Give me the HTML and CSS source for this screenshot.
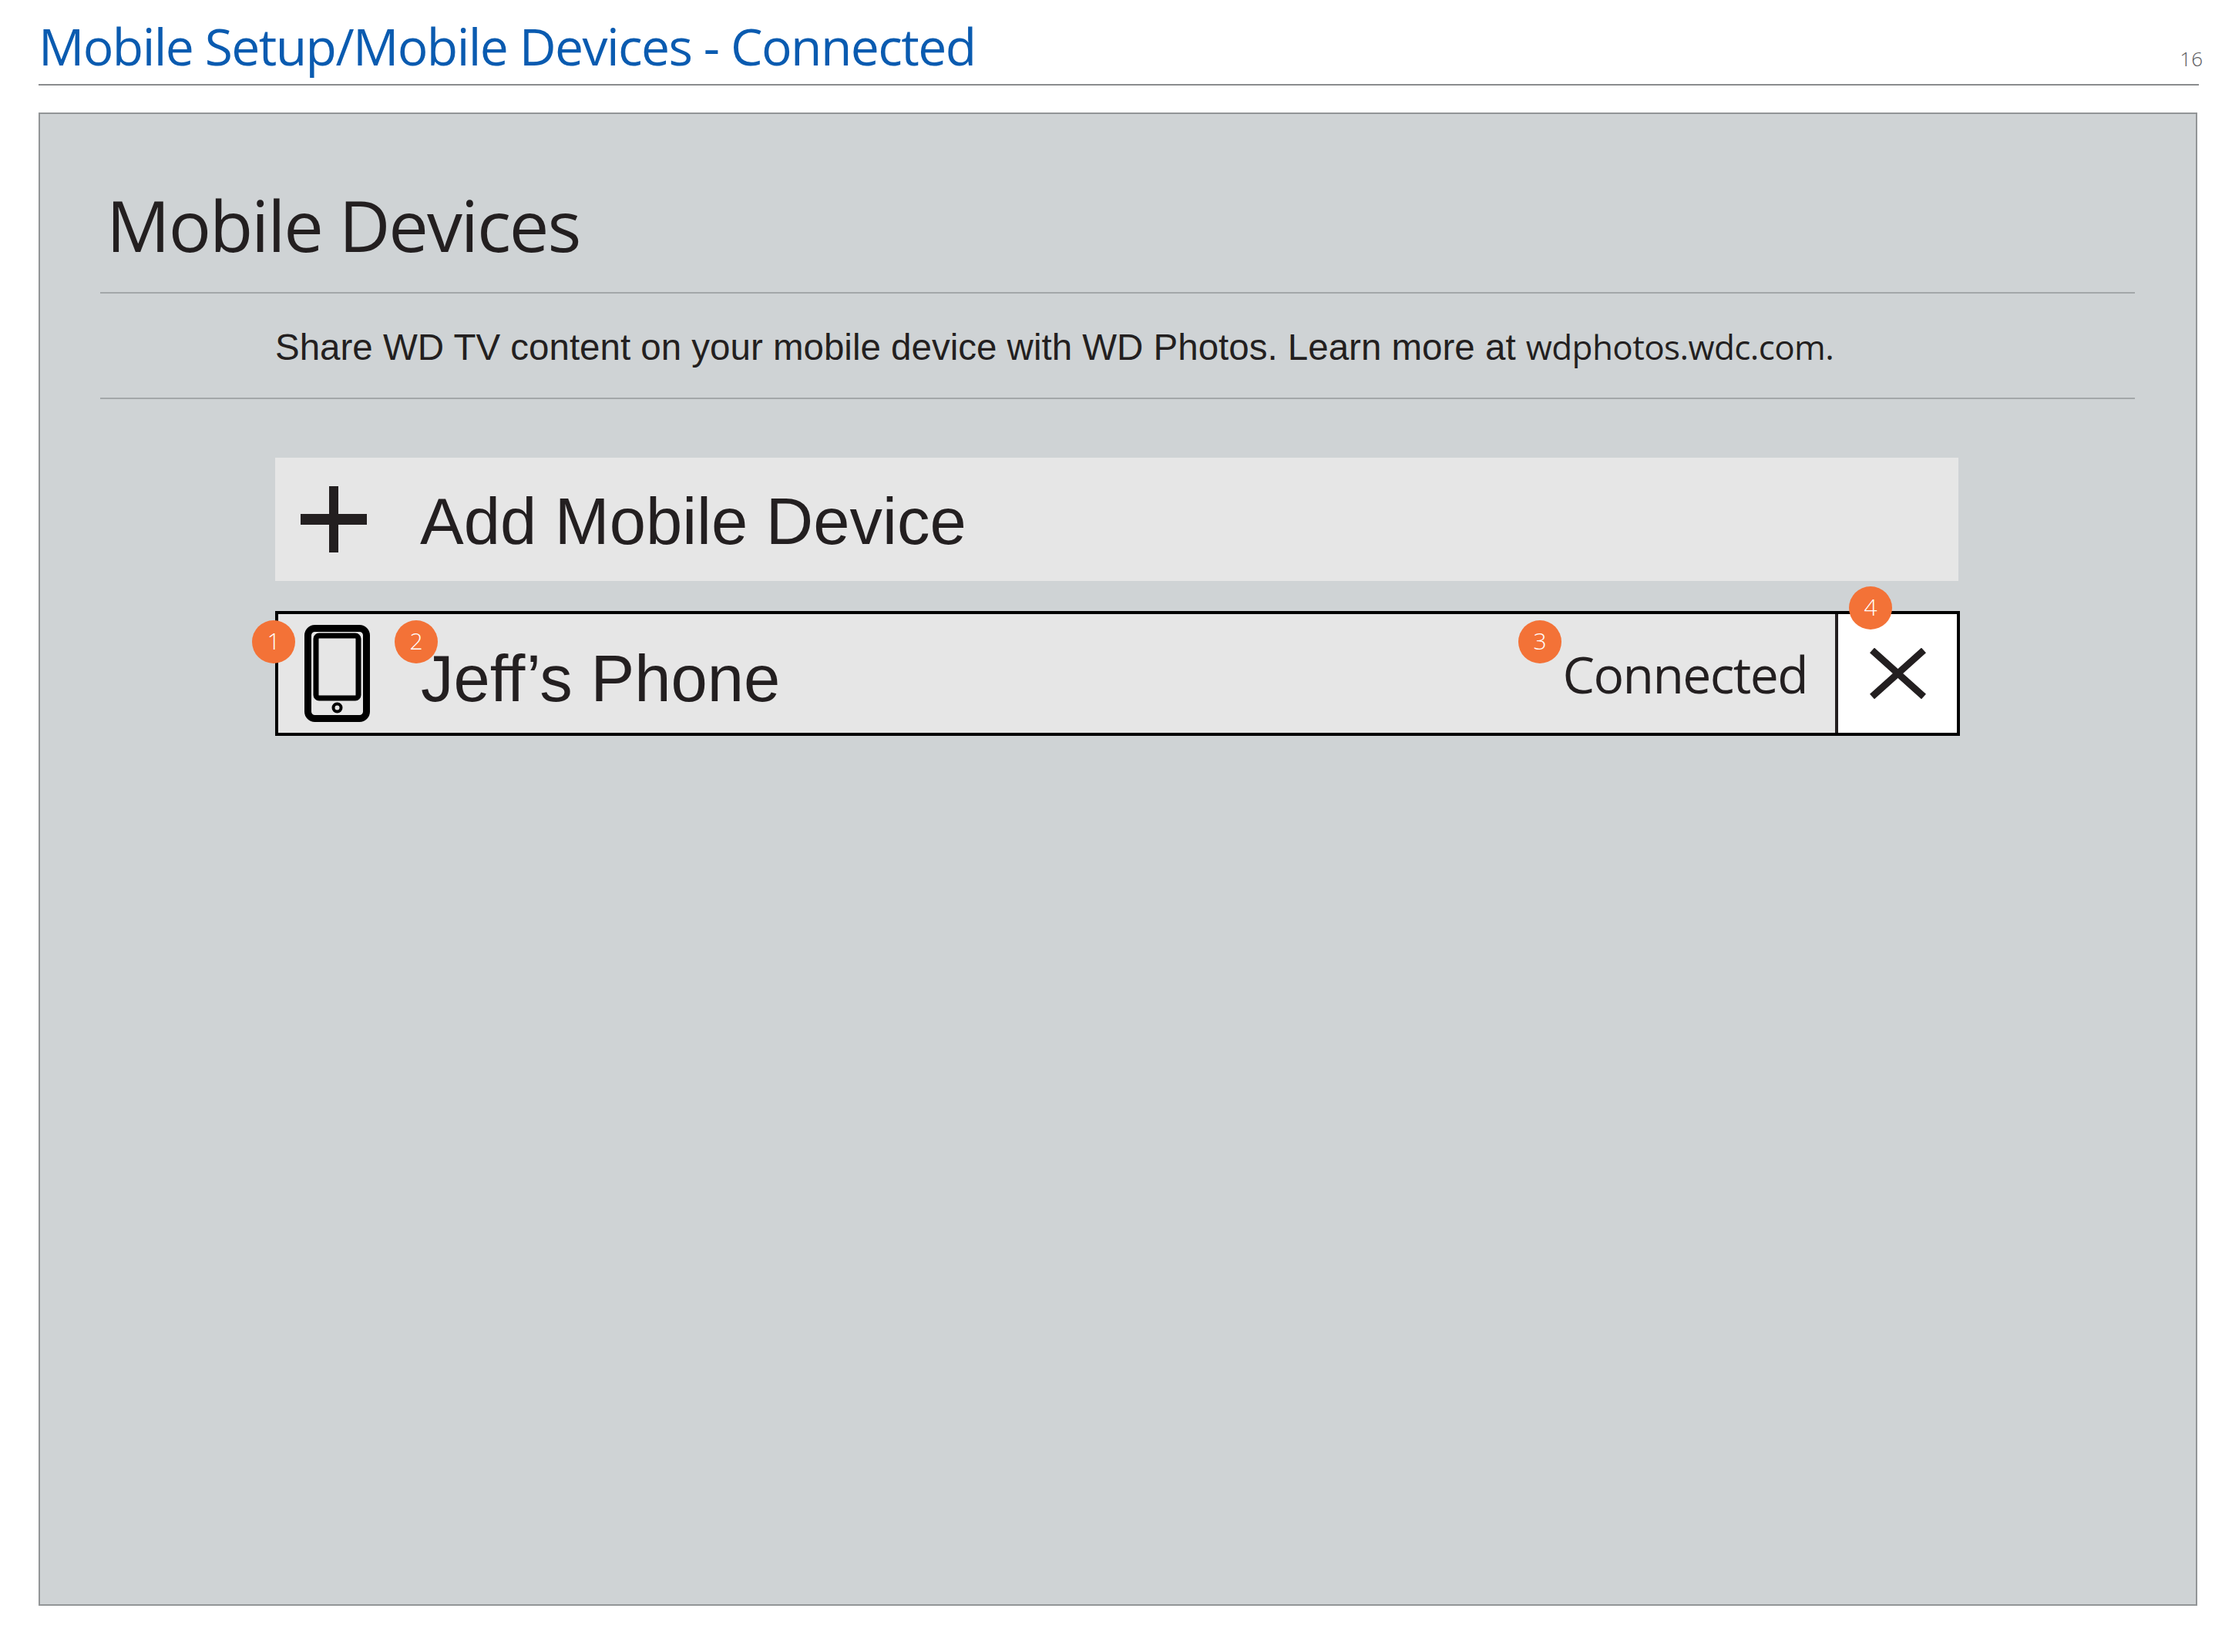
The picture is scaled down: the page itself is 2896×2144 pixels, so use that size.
FILE: index.html
```html
<!DOCTYPE html>
<html lang="en">
<head>
  <meta charset="UTF-8" />
  <title>Mobile Setup/Mobile Devices - Connected</title>
  <link rel="stylesheet" href="styles.css">
</head>
<body>

  <header class="page-header">
    <h1>Mobile Setup/Mobile Devices - Connected</h1>
    <span class="page-num">16</span>
  </header>

  <main class="panel">
    <h2>Mobile Devices</h2>
    <p class="intro">Share WD TV content on your mobile device with WD Photos. Learn more at <span class="link">wdphotos.wdc.com.</span></p>

    <div class="device-list">
      <div class="row add-row">
        <svg class="plus-icon" viewBox="0 0 86 86">
          <path d="M37 0h12v36h37v14H49v36H37V50H0V36h37z" fill="#231f20"/>
        </svg>
        <span class="row-name">Add Mobile Device</span>
      </div>

      <div class="row device-row">
        <span class="badge badge-1">1</span>
        <svg class="phone-icon" viewBox="0 0 85 126">
          <rect x="4.500" y="4.500" width="76" height="117" rx="9" fill="none" stroke="#000" stroke-width="9"/>
          <rect x="15" y="14" width="55" height="81" rx="4" fill="none" stroke="#000" stroke-width="7"/>
          <circle cx="42.500" cy="107.500" r="5" fill="none" stroke="#000" stroke-width="4"/>
        </svg>
        <span class="badge badge-2">2</span>
        <span class="row-name">Jeff’s Phone</span>
        <span class="badge badge-3">3</span>
        <span class="status">Connected</span>
        <div class="close-box">
          <span class="badge badge-4">4</span>
          <svg class="close-icon" viewBox="0 0 73 66">
            <path d="M3 3l67 60M70 3L3 63" fill="none" stroke="#231f20" stroke-width="9"/>
          </svg>
        </div>
      </div>
    </div>
  </main>

</body>
</html>
```

FILE: styles.css
```css
body {
  margin: 0;
  background: #fff;
  font-family: "Liberation Sans", Arial, sans-serif;
  color: #231f20;
}

.page-header {
  display: flex;
  justify-content: space-between;
  align-items: flex-end;
  height: 109px;
  margin: 0 43px 0 50px;
  border-bottom: 2px solid #8a8c8e;
  position: relative;
}

.page-header h1 {
  margin: 0 0 8px;
  font-family: "Open Sans", sans-serif;
  font-size: 66px;
  font-weight: 400;
  line-height: 84px;
  letter-spacing: -1.6px;
  color: #0a5bb0;
}

.page-num {
  position: absolute;
  right: -5px;
  top: 58px;
  font-family: "Open Sans", sans-serif;
  font-size: 26px;
  font-weight: 300;
  color: #58595b;
}

.panel {
  box-sizing: border-box;
  height: 1938px;
  margin: 35px 45px 0 50px;
  padding: 0 0 0 78px;
  background: #cfd3d5;
  border: 2px solid #929597;
}

.panel h2 {
  box-sizing: border-box;
  height: 233px;
  width: 2640px;
  margin: 0;
  padding: 84px 0 0 8px;
  font-family: "Open Sans", sans-serif;
  font-size: 92px;
  font-weight: 400;
  line-height: 120px;
  letter-spacing: -2.100px;
  border-bottom: 2px solid #a3a7a9;
}

.intro {
  box-sizing: border-box;
  height: 137px;
  width: 2640px;
  margin: 0;
  padding: 39px 0 0 227px;
  font-size: 47.500px;
  line-height: 60px;
  border-bottom: 2px solid #a3a7a9;
}

.link {
  font-family: "Open Sans", sans-serif;
  font-size: 44px;
  letter-spacing: -0.6px;
}

.device-list {
  display: flex;
  flex-direction: column;
  gap: 39px;
  width: 2186px;
  margin: 76px 0 0 227px;
}

.row {
  position: relative;
  display: flex;
  align-items: center;
  box-sizing: border-box;
  height: 160px;
  background: #e6e6e6;
}

.row-name {
  font-size: 85px;
  line-height: 100px;
}

.add-row {
  margin-right: 2px;
  padding-left: 33px;
}

.add-row .row-name {
  margin-top: 6px;
}

.plus-icon {
  width: 86px;
  height: 86px;
  margin-right: 69px;
}

.device-row {
  height: 162px;
  padding-left: 34px;
  border: 4px solid #000;
}

.phone-icon {
  width: 85px;
  height: 126px;
  margin-right: 66px;
}

.device-row .row-name {
  margin-top: 14px;
}

.status {
  margin-left: auto;
  margin-right: 36px;
  font-family: "Open Sans", sans-serif;
  font-size: 66px;
  letter-spacing: -1.6px;
}

.close-box {
  position: relative;
  flex: none;
  display: flex;
  align-items: center;
  justify-content: center;
  box-sizing: border-box;
  width: 158px;
  height: 154px;
  background: #fff;
  border-left: 4px solid #231f20;
}

.close-icon {
  width: 73px;
  height: 66px;
}

.badge {
  position: absolute;
  width: 56px;
  height: 56px;
  border-radius: 50%;
  background: #f37237;
  color: #fff;
  font-family: "Open Sans", sans-serif;
  font-size: 30px;
  font-weight: 300;
  line-height: 54px;
  text-align: center;
}

.badge-1 { left: -34px; top: 8px; }
.badge-2 { left: 151px; top: 8px; }
.badge-3 { left: 1609px; top: 8px; }
.badge-4 { left: 14px; top: -36px; }
```
